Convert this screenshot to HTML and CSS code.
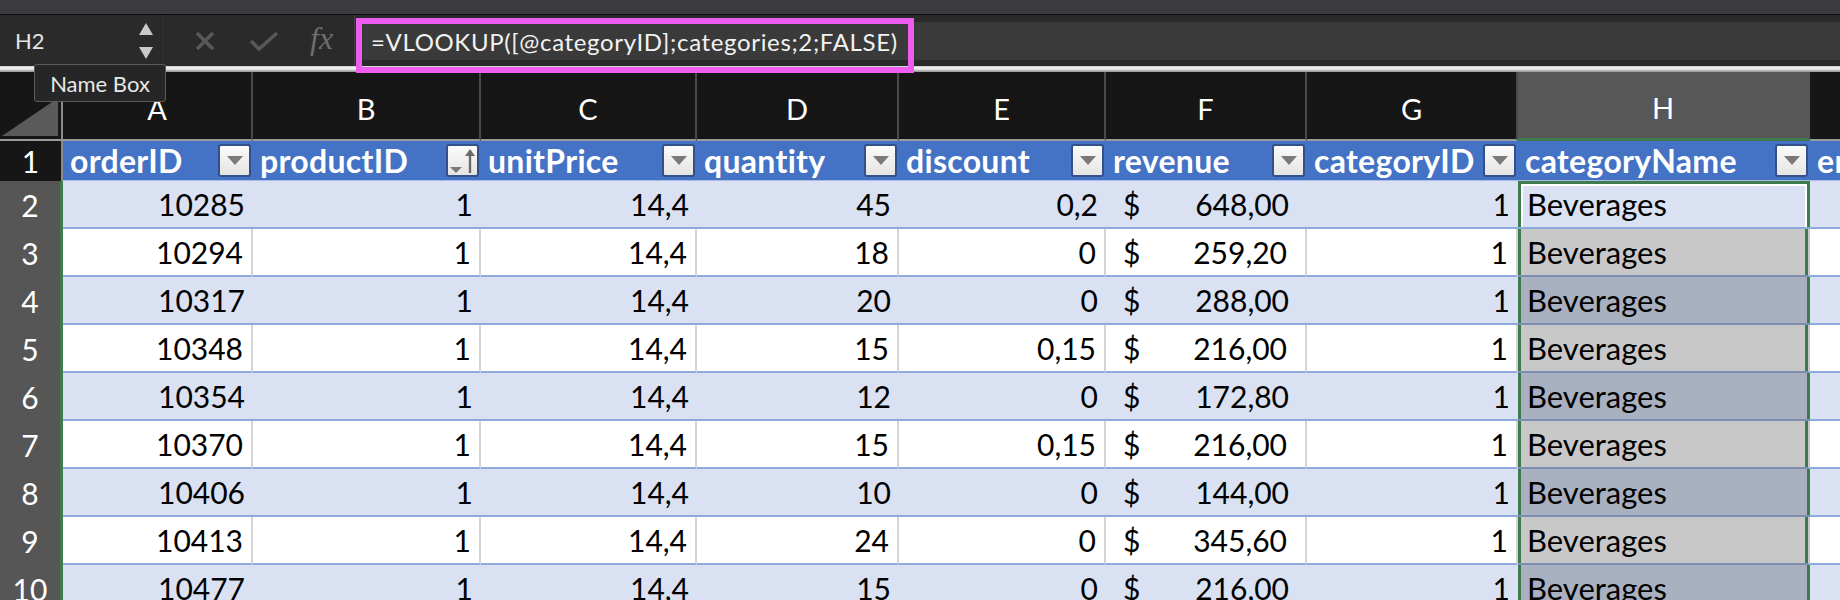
FILE: index.html
```html
<!DOCTYPE html>
<html>
<head>
<meta charset="utf-8">
<link rel="stylesheet" href="styles.css">
</head>
<body>
<div class="app">
  <div class="topbar"></div>
  <div class="fbar">
    <div class="namebox">
      <span class="nb-text">H2</span>
      <span class="stepper">
        <svg width="16" height="36" viewBox="0 0 16 36"><polygon points="8,0 15,12 1,12" fill="#c9c9c9"/><polygon points="1,24 15,24 8,36" fill="#c9c9c9"/></svg>
      </span>
    </div>
    <div class="fbtns">
      <svg class="ic-x" width="20" height="18" viewBox="0 0 20 18"><path d="M2 1 L18 17 M18 1 L2 17" stroke="#585858" stroke-width="3.6" fill="none"/></svg>
      <svg class="ic-ok" width="30" height="20" viewBox="0 0 30 20"><path d="M2 10 L10 18 L28 2" stroke="#585858" stroke-width="3.6" fill="none"/></svg>
      <span class="fx">fx</span>
    </div>
    <div class="finput"><span class="ftext">=VLOOKUP([@categoryID];categories;2;FALSE)</span></div>
  </div>
  <div class="rule"></div>

  <div class="sheet">
    <div class="row letters">
      <div class="corner"><svg width="60" height="67" viewBox="0 0 60 67"><polygon points="2,64 58,64 58,26" fill="#5a5a5a"/></svg></div>
      <div class="ch">A</div><div class="ch">B</div><div class="ch">C</div><div class="ch">D</div>
      <div class="ch">E</div><div class="ch">F</div><div class="ch">G</div><div class="ch ch-sel">H</div><div class="ch">I</div>
    </div>

    <div class="row thead">
      <div class="rh rh-top">1</div>
      <div class="th"><span>orderID</span><span class="fb"><svg width="16" height="9" viewBox="0 0 16 9"><polygon points="0,0 16,0 8,9" fill="#7a7a7a"/></svg></span></div>
      <div class="th"><span>productID</span><span class="fb"><svg width="28" height="26" viewBox="0 0 28 26"><polygon points="1,19 13,19 7,25" fill="#7a7a7a"/><path d="M21 25 L21 4" stroke="#6a6a6a" stroke-width="2.4"/><polygon points="16,8 21,1 26,8" fill="#6a6a6a"/></svg></span></div>
      <div class="th"><span>unitPrice</span><span class="fb"><svg width="16" height="9" viewBox="0 0 16 9"><polygon points="0,0 16,0 8,9" fill="#7a7a7a"/></svg></span></div>
      <div class="th"><span>quantity</span><span class="fb"><svg width="16" height="9" viewBox="0 0 16 9"><polygon points="0,0 16,0 8,9" fill="#7a7a7a"/></svg></span></div>
      <div class="th"><span>discount</span><span class="fb"><svg width="16" height="9" viewBox="0 0 16 9"><polygon points="0,0 16,0 8,9" fill="#7a7a7a"/></svg></span></div>
      <div class="th"><span>revenue</span><span class="fb"><svg width="16" height="9" viewBox="0 0 16 9"><polygon points="0,0 16,0 8,9" fill="#7a7a7a"/></svg></span></div>
      <div class="th"><span>categoryID</span><span class="fb"><svg width="16" height="9" viewBox="0 0 16 9"><polygon points="0,0 16,0 8,9" fill="#7a7a7a"/></svg></span></div>
      <div class="th"><span>categoryName</span><span class="fb"><svg width="16" height="9" viewBox="0 0 16 9"><polygon points="0,0 16,0 8,9" fill="#7a7a7a"/></svg></span></div>
      <div class="th th-cut"><span>employeeID</span></div>
    </div>

    <div class="row band">
      <div class="rh">2</div>
      <div class="td">10285</div><div class="td">1</div><div class="td">14,4</div><div class="td">45</div><div class="td">0,2</div>
      <div class="td cur"><span>$</span><span>648,00</span></div><div class="td">1</div>
      <div class="td txt active">Beverages</div><div class="td"></div>
    </div>
    <div class="row plain">
      <div class="rh">3</div>
      <div class="td">10294</div><div class="td">1</div><div class="td">14,4</div><div class="td">18</div><div class="td">0</div>
      <div class="td cur"><span>$</span><span>259,20</span></div><div class="td">1</div>
      <div class="td txt sel">Beverages</div><div class="td"></div>
    </div>
    <div class="row band">
      <div class="rh">4</div>
      <div class="td">10317</div><div class="td">1</div><div class="td">14,4</div><div class="td">20</div><div class="td">0</div>
      <div class="td cur"><span>$</span><span>288,00</span></div><div class="td">1</div>
      <div class="td txt sel">Beverages</div><div class="td"></div>
    </div>
    <div class="row plain">
      <div class="rh">5</div>
      <div class="td">10348</div><div class="td">1</div><div class="td">14,4</div><div class="td">15</div><div class="td">0,15</div>
      <div class="td cur"><span>$</span><span>216,00</span></div><div class="td">1</div>
      <div class="td txt sel">Beverages</div><div class="td"></div>
    </div>
    <div class="row band">
      <div class="rh">6</div>
      <div class="td">10354</div><div class="td">1</div><div class="td">14,4</div><div class="td">12</div><div class="td">0</div>
      <div class="td cur"><span>$</span><span>172,80</span></div><div class="td">1</div>
      <div class="td txt sel">Beverages</div><div class="td"></div>
    </div>
    <div class="row plain">
      <div class="rh">7</div>
      <div class="td">10370</div><div class="td">1</div><div class="td">14,4</div><div class="td">15</div><div class="td">0,15</div>
      <div class="td cur"><span>$</span><span>216,00</span></div><div class="td">1</div>
      <div class="td txt sel">Beverages</div><div class="td"></div>
    </div>
    <div class="row band">
      <div class="rh">8</div>
      <div class="td">10406</div><div class="td">1</div><div class="td">14,4</div><div class="td">10</div><div class="td">0</div>
      <div class="td cur"><span>$</span><span>144,00</span></div><div class="td">1</div>
      <div class="td txt sel">Beverages</div><div class="td"></div>
    </div>
    <div class="row plain">
      <div class="rh">9</div>
      <div class="td">10413</div><div class="td">1</div><div class="td">14,4</div><div class="td">24</div><div class="td">0</div>
      <div class="td cur"><span>$</span><span>345,60</span></div><div class="td">1</div>
      <div class="td txt sel">Beverages</div><div class="td"></div>
    </div>
    <div class="row band">
      <div class="rh">10</div>
      <div class="td">10477</div><div class="td">1</div><div class="td">14,4</div><div class="td">15</div><div class="td">0</div>
      <div class="td cur"><span>$</span><span>216,00</span></div><div class="td">1</div>
      <div class="td txt sel">Beverages</div><div class="td"></div>
    </div>
  </div>

  <div class="tooltip">Name Box</div>
  <div class="mark"></div>
</div>
</body>
</html>
```

FILE: styles.css
```css
* { box-sizing: border-box; }
body { margin: 0; background: #161616; font-family: Lato, "Open Sans", sans-serif; overflow: hidden; }
.app { position: relative; width: 1840px; height: 600px; overflow: hidden; background: #161616; }

.topbar { height: 15px; background: #3b3b40; border-bottom: 1px solid #0c0c0c; }

.fbar { height: 51px; background: #2a2a2a; display: flex; }
.namebox { width: 164px; display: flex; align-items: center; justify-content: space-between; padding: 0 9px 0 15px; border-right: 1px solid #343434; }
.nb-text { color: #e4e4e4; font-size: 22px; }
.stepper { display: flex; }
.fbtns { width: 191px; display: flex; align-items: center; border-right: 1px solid #444; padding-left: 31px; }
.ic-x { margin-right: 34px; }
.ic-ok { margin-right: 31px; }
.fx { font-family: "Liberation Serif", serif; font-style: italic; color: #6e6e6e; font-size: 32px; margin-top: -4px; }
.finput { flex: 1; margin: 7px 0 6px 2px; background: #3a3a3a; display: flex; align-items: center; padding-left: 14px; }
.ftext { color: #f2f2f2; font-size: 24px; letter-spacing: 0.65px; white-space: nowrap; }

.rule { height: 6px; background: linear-gradient(#c9c9c9, #fbfbfb 35%, #cfcfcf 65%, #8d8d8d); }

.sheet { display: flex; flex-direction: column; width: 1840px; overflow: hidden; }
.row { display: grid; grid-template-columns: 63px 190px 228px 216px 202px 207px 201px 211px 292px 220px; width: 2030px; }

.letters { height: 69px; }
.corner { border-bottom: 2px solid #9a9a9a; border-right: 2px solid #8a8a8a; overflow: hidden; }
.corner svg { display: block; }
.ch { color: #fff; font-size: 29px; display: flex; align-items: center; justify-content: center; padding-top: 5px; border-bottom: 2px solid #9a9a9a; border-right: 2px solid #4a4a4a; }
.ch-sel { background: #575757; border-bottom: 3px solid #3e7b4f; border-right-color: #575757; }

.thead { height: 40px; }
.rh { background: #565656; color: #fff; font-size: 30px; display: flex; align-items: center; justify-content: center; border-right: 3px solid #3e7b4f; }
.rh-top { background: #161616; border-right: 2px solid #8a8a8a; }
.th { background: #4472c4; color: #fff; font-weight: 700; font-size: 32px; letter-spacing: 0.3px; display: flex; align-items: center; justify-content: space-between; padding: 0 2px 0 7px; white-space: nowrap; overflow: hidden; border-bottom: 1px solid #a9bde3; }
.th-cut { justify-content: flex-start; }
.fb { width: 33px; height: 33px; flex: none; border: 2px solid #33508a; border-radius: 3px; background: linear-gradient(#fbfbfb, #e4e4e4); display: flex; align-items: center; justify-content: center; }

.band, .plain { height: 48px; }
.td { font-size: 30px; color: #000; display: flex; align-items: center; justify-content: flex-end; padding: 0 8px 0 4px; border-bottom: 2px solid #8eaadb; white-space: nowrap; overflow: hidden; }
.band .td { background: #d9e1f2; }
.plain .td { background: #fff; border-right: 2px solid #d4d4d4; }
.td.cur { justify-content: space-between; padding: 0 18px 0 17px; }
.td.txt { justify-content: flex-start; padding-left: 9px; font-size: 31px; }
.band .td.sel { background: #a9b0bf; border-bottom-color: #7b8db3; }
.plain .td.sel { background: #c8c8c8; border-bottom-color: #7b8db3; border-right-color: #c8c8c8; }
.td.sel { box-shadow: inset 3px 0 0 #3e7b4f, inset -3px 0 0 #3e7b4f; }
.td.active { box-shadow: inset 0 3px 0 #3e7b4f, inset 3px 0 0 #3e7b4f, inset -3px 0 0 #3e7b4f, inset 0 5px 0 #fff, inset 5px 0 0 #fff, inset -5px 0 0 #fff; }

.tooltip { position: absolute; left: 34px; top: 64px; width: 132px; height: 38px; background: #262626; border: 1px solid #5c5c5c; border-radius: 3px; color: #e8e8e8; font-size: 22px; display: flex; align-items: center; justify-content: center; }
.mark { position: absolute; left: 356px; top: 18px; width: 558px; height: 55px; border: 6px solid #ee5cf0; }
```
